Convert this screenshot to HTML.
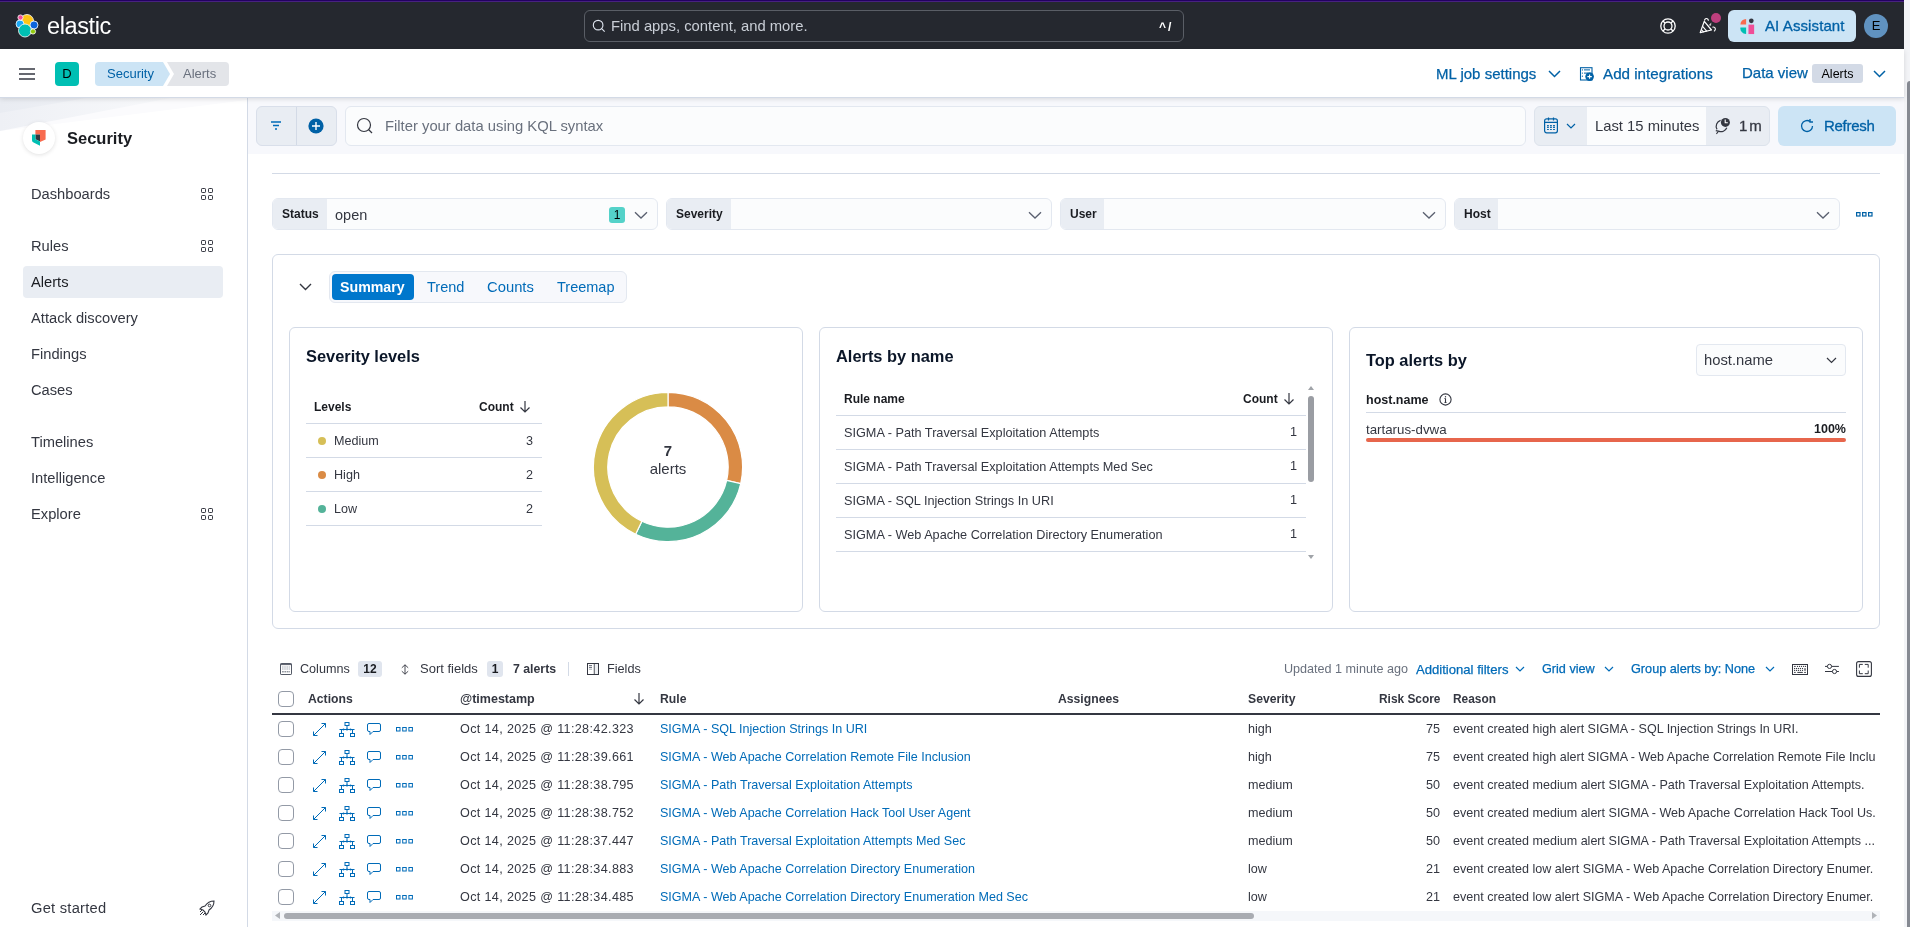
<!DOCTYPE html>
<html><head><meta charset="utf-8">
<style>
*{box-sizing:border-box;margin:0;padding:0}
html,body{width:1910px;height:927px;overflow:hidden;background:#fff;font-family:"Liberation Sans",sans-serif;color:#343741;-webkit-font-smoothing:antialiased}
.a{position:absolute}
.t{position:absolute;white-space:nowrap;line-height:1}
svg{display:block}
/* header */
#hdr{left:0;top:0;width:1904px;height:49px;background:linear-gradient(#230062 0,#230062 1px,#47227f 1px,#47227f 2px,#25282f 2px)}
#crumb{left:0;top:49px;width:1904px;height:48px;background:#fff;box-shadow:0 1px 0 #d3dae6,0 2px 5px rgba(0,0,0,.13);z-index:5}
#vscroll{left:1904px;top:0;width:6px;height:927px;background:#f3f4f7}
#vthumb{left:1907px;top:81px;width:3px;height:846px;background:#868a92;border-radius:3px 0 0 0}
#side{left:0;top:97px;width:248px;height:830px;background:#fff;border-right:1px solid #d3dae6}
.nav{position:absolute;left:31px;font-size:14.7px;color:#343741;white-space:nowrap;line-height:1}
.grid{position:absolute;left:201px;width:12px;height:12px}
#qbar{left:248px;top:97px;width:1656px;height:57px;background:#f7f8fc}
.btngrp{background:#e9edf3;border:1px solid #d9dfea;border-radius:6px}
.ctrl{position:absolute;height:32px;border:1px solid #e3e8f0;border-radius:6px;background:#fbfcfd;overflow:hidden}
.ctrl .lbl{position:absolute;left:0;top:0;bottom:0;background:#e9edf3;font-weight:700;font-size:12px;color:#1a1c21;line-height:30px;padding-left:9px}
.chev{position:absolute}
.panel{position:absolute;border:1px solid #d3dae6;border-radius:6px;background:#fff}
.h3{position:absolute;font-size:16px;font-weight:700;color:#0b1628;white-space:nowrap;line-height:1}
.link{color:#006bb8}
</style></head><body><div id="root" style="position:absolute;left:0;top:0;width:1910px;height:927px;overflow:hidden;will-change:transform">

<!-- HEADER -->
<div id="hdr" class="a">
  <!-- elastic logo -->
  <svg class="a" style="left:14px;top:12px" width="26" height="26" viewBox="0 0 26 26">
    <circle cx="13" cy="9" r="6.5" fill="#fec514" stroke="#fff" stroke-width="0.8"/>
    <circle cx="6" cy="12" r="4" fill="#1ba9f5" stroke="#fff" stroke-width="0.8"/>
    <circle cx="20" cy="13" r="4" fill="#0b64dd" stroke="#fff" stroke-width="0.8"/>
    <circle cx="11" cy="18.5" r="6.5" fill="#00bfb3" stroke="#fff" stroke-width="0.8"/>
    <circle cx="6.5" cy="5.5" r="2.6" fill="#f04e98" stroke="#fff" stroke-width="0.8"/>
    <circle cx="19" cy="19.5" r="2.6" fill="#93c90e" stroke="#fff" stroke-width="0.8"/>
  </svg>
  <div class="t" style="left:47px;top:15px;font-size:23.5px;color:#fff;letter-spacing:-0.4px">elastic</div>
  <!-- search -->
  <div class="a" style="left:584px;top:10px;width:600px;height:32px;border:1px solid #5a5e66;border-radius:6px;background:#25282f"></div>
  <svg class="a" style="left:592px;top:19px" width="14" height="14" viewBox="0 0 16 16"><circle cx="7" cy="7" r="5.5" fill="none" stroke="#dfe5ef" stroke-width="1.3"/><path d="M11 11l3.5 3.5" stroke="#dfe5ef" stroke-width="1.3"/></svg>
  <div class="t" style="left:611px;top:19px;font-size:14.8px;color:#c9ced6">Find apps, content, and more.</div>
  <div class="t" style="left:1159px;top:21px;font-size:12px;color:#fff;font-weight:700;letter-spacing:2px">^/</div>
  <!-- help -->
  <svg class="a" style="left:1659px;top:17px" width="18" height="18" viewBox="0 0 18 18"><circle cx="9" cy="9" r="7.2" fill="none" stroke="#fff" stroke-width="1.3"/><circle cx="9" cy="9" r="4" fill="none" stroke="#fff" stroke-width="1.3"/><path d="M4 4l2.2 2.2M14 4l-2.2 2.2M4 14l2.2-2.2M14 14l-2.2-2.2" stroke="#fff" stroke-width="1.3"/></svg>
  <!-- news -->
  <svg class="a" style="left:1696px;top:14px" width="24" height="22" viewBox="0 0 24 22"><path d="M4.2 18.6L8.3 7.3 15.5 16z" fill="none" stroke="#fff" stroke-width="1.2" stroke-linejoin="round"/><path d="M6.6 12.4l4.3 5M5.4 15.6l2.3 2.6" stroke="#fff" stroke-width="1.1"/><path d="M8.6 6.6C8.4 4 12.2 3.6 12.4 6.8M16.4 13.2C19.2 12.4 20.6 15.6 18 17.4" fill="none" stroke="#fff" stroke-width="1.1"/><path d="M12.6 11.2l2.8-2.6-.4 3.2z" fill="#ccc"/></svg>
  <div class="a" style="left:1711px;top:13px;width:10px;height:10px;border-radius:50%;background:#bd3f7d"></div>
  <!-- AI assistant -->
  <div class="a" style="left:1728px;top:10px;width:128px;height:32px;border-radius:6px;background:#cce4f5"></div>
  <svg class="a" style="left:1740px;top:18px" width="16" height="17" viewBox="0 0 16 18">
    <path d="M0 7a6 6 0 0 1 6-6v6z" fill="#f86b4f"/><path d="M0 10h6v7a6 6 0 0 1-6-7z" fill="#00bfb3"/><circle cx="11.5" cy="3" r="2.5" fill="#343741"/><rect x="8.5" y="7" width="6" height="10" fill="#f04e98"/>
  </svg>
  <div class="t" style="left:1765px;top:18px;font-size:15px;letter-spacing:0.1px;-webkit-text-stroke:0.3px #0061a6;color:#0061a6">AI Assistant</div>
  <div class="a" style="left:1864px;top:14px;width:24px;height:24px;border-radius:50%;background:#6092c0;color:#000;font-size:13px;text-align:center;line-height:23px">E</div>
</div>

<!-- BREADCRUMB BAR -->
<div id="crumb" class="a">
  <svg class="a" style="left:19px;top:19px" width="16" height="12" viewBox="0 0 16 12"><path d="M0 1h16M0 6h16M0 11h16" stroke="#343741" stroke-width="1.3"/></svg>
  <div class="a" style="left:55px;top:13px;width:24px;height:24px;border-radius:4px;background:#00bfb3;color:#000;font-size:13px;text-align:center;line-height:24px">D</div>
  <svg class="a" style="left:95px;top:13px" width="135" height="24" viewBox="0 0 135 24">
    <path d="M4 0h64l7 12-7 12H4a4 4 0 0 1-4-4V4a4 4 0 0 1 4-4z" fill="#cce4f5"/>
    <path d="M72 0h58a4 4 0 0 1 4 4v16a4 4 0 0 1-4 4H72l7-12z" fill="#e3e5e9"/>
  </svg>
  <div class="t" style="left:107px;top:18px;font-size:13px;color:#0061a6">Security</div>
  <div class="t" style="left:183px;top:18px;font-size:13px;color:#69707d">Alerts</div>
  <div class="t" style="left:1436px;top:17px;font-size:15px;color:#0061a6;-webkit-text-stroke:0.25px #0061a6">ML job settings</div>
  <svg class="a" style="left:1548px;top:21px" width="13" height="8" viewBox="0 0 13 8"><path d="M1 1l5.5 5.5L12 1" fill="none" stroke="#0061a6" stroke-width="1.5"/></svg>
  <svg class="a" style="left:1579px;top:17px" width="17" height="17" viewBox="0 0 17 17"><rect x="1.5" y="1.7" width="11.5" height="12.3" fill="none" stroke="#0061a6" stroke-width="1.1"/><circle cx="3.4" cy="3.9" r=".65" fill="#0061a6"/><circle cx="3.4" cy="7.1" r=".65" fill="#0061a6"/><circle cx="3.4" cy="10.2" r=".65" fill="#0061a6"/><path d="M5 3.9h6M5 7.1h4" stroke="#0061a6" stroke-width="1"/><circle cx="10.6" cy="10.6" r="4.3" fill="#0061a6"/><path d="M10.6 8.4v4.4M8.4 10.6h4.4" stroke="#fff" stroke-width="1.1"/></svg>
  <div class="t" style="left:1603px;top:17px;font-size:15.2px;color:#0061a6;-webkit-text-stroke:0.25px #0061a6">Add integrations</div>
  <div class="t" style="left:1742px;top:16px;font-size:15px;color:#0061a6;-webkit-text-stroke:0.25px #0061a6">Data view</div>
  <div class="a" style="left:1812px;top:15px;width:51px;height:19px;border-radius:3px;background:#d3dae6;font-size:12.5px;color:#000;text-align:center;line-height:20px">Alerts</div>
  <svg class="a" style="left:1873px;top:21px" width="13" height="8" viewBox="0 0 13 8"><path d="M1 1l5.5 5.5L12 1" fill="none" stroke="#0061a6" stroke-width="1.5"/></svg>
</div>

<div id="vscroll" class="a"></div>
<div id="vthumb" class="a"></div>

<!-- SIDEBAR -->
<div id="side" class="a">
  <svg class="a" style="left:0;top:0" width="247" height="40" viewBox="0 0 247 40"><defs><linearGradient id="sg1" x1="0" y1="0" x2="1" y2="0"><stop offset="0" stop-color="#eef0f5"/><stop offset="1" stop-color="#f8f9fb"/></linearGradient><linearGradient id="sg2" x1="0" y1="0" x2="1" y2="0"><stop offset="0" stop-color="#e9ecf2"/><stop offset="1" stop-color="#eef0f5"/></linearGradient></defs><path d="M0 0H247V3L0 34z" fill="#fbfbfd"/><path d="M0 0H176L0 34z" fill="url(#sg1)"/><path d="M0 0H92L0 16z" fill="url(#sg2)"/></svg>
  <div class="a" style="left:23px;top:25px;width:32px;height:32px;border-radius:50%;background:#fff;box-shadow:0 1px 4px rgba(0,0,0,.12)"></div>
  <svg class="a" style="left:32px;top:33px" width="14" height="16" viewBox="0 0 14 16">
    <path d="M3.4 0H13.6V9.4L8 12V4.6H3.4z" fill="#f86b4f"/>
    <path d="M3.4 4.6H8V11.5L3.4 9.2z" fill="#343741"/>
    <path d="M0 4.6H3.4V9.2L8 11.5V15.8L1.6 12.6A2.6 2.6 0 0 1 0 10.3z" fill="#00bfb3"/>
  </svg>
  <div class="t" style="left:67px;top:33px;font-size:16.5px;font-weight:700;color:#1a1c21">Security</div>
  <div class="nav" style="top:90px">Dashboards</div>
  <svg class="grid" style="top:91px" viewBox="0 0 12 12"><rect x=".5" y=".5" width="4" height="4" rx=".7" fill="none" stroke="#343741" stroke-width="1"/><rect x="7.5" y=".5" width="4" height="4" rx=".7" fill="none" stroke="#343741" stroke-width="1"/><rect x=".5" y="7.5" width="4" height="4" rx=".7" fill="none" stroke="#343741" stroke-width="1"/><rect x="7.5" y="7.5" width="4" height="4" rx=".7" fill="none" stroke="#343741" stroke-width="1"/></svg>
  <div class="nav" style="top:142px">Rules</div>
  <svg class="grid" style="top:143px" viewBox="0 0 12 12"><rect x=".5" y=".5" width="4" height="4" rx=".7" fill="none" stroke="#343741" stroke-width="1"/><rect x="7.5" y=".5" width="4" height="4" rx=".7" fill="none" stroke="#343741" stroke-width="1"/><rect x=".5" y="7.5" width="4" height="4" rx=".7" fill="none" stroke="#343741" stroke-width="1"/><rect x="7.5" y="7.5" width="4" height="4" rx=".7" fill="none" stroke="#343741" stroke-width="1"/></svg>
  <div class="a" style="left:23px;top:169px;width:200px;height:32px;border-radius:4px;background:#e9edf3"></div>
  <div class="nav" style="top:178px;color:#1a1c21">Alerts</div>
  <div class="nav" style="top:214px">Attack discovery</div>
  <div class="nav" style="top:250px">Findings</div>
  <div class="nav" style="top:286px">Cases</div>
  <div class="nav" style="top:338px">Timelines</div>
  <div class="nav" style="top:374px">Intelligence</div>
  <div class="nav" style="top:410px">Explore</div>
  <svg class="grid" style="top:411px" viewBox="0 0 12 12"><rect x=".5" y=".5" width="4" height="4" rx=".7" fill="none" stroke="#343741" stroke-width="1"/><rect x="7.5" y=".5" width="4" height="4" rx=".7" fill="none" stroke="#343741" stroke-width="1"/><rect x=".5" y="7.5" width="4" height="4" rx=".7" fill="none" stroke="#343741" stroke-width="1"/><rect x="7.5" y="7.5" width="4" height="4" rx=".7" fill="none" stroke="#343741" stroke-width="1"/></svg>
  <div class="nav" style="top:804px;letter-spacing:0.25px">Get started</div>
  <svg class="a" style="left:199px;top:803px" width="16" height="16" viewBox="0 0 16 16"><path d="M15 1c-4 0-7 2-9 5L3 7l-2 2 3 1 2 2 1 3 2-2 1-3c3-2 5-5 5-9z" fill="none" stroke="#343741" stroke-width="1.1"/><circle cx="10.5" cy="5.5" r="1.3" fill="none" stroke="#343741" stroke-width="1"/><path d="M4 12l-3 3M3 10l-2 2M6 13l-2 2" stroke="#343741" stroke-width="1"/></svg>
</div>

<!-- MAIN -->
<div id="qbar" class="a"></div>
<div class="a btngrp" style="left:256px;top:106px;width:81px;height:40px"></div>
<div class="a" style="left:296px;top:107px;width:1px;height:38px;background:#d3dae6"></div>
<svg class="a" style="left:269px;top:120px" width="14" height="12" viewBox="0 0 14 12"><path d="M2 2h10M4 5.5h6M6 9h2" stroke="#006bb8" stroke-width="1.3"/></svg>
<svg class="a" style="left:308px;top:118px" width="16" height="16" viewBox="0 0 16 16"><circle cx="8" cy="8" r="7.6" fill="#0061a6"/><path d="M8 4v8M4 8h8" stroke="#fff" stroke-width="1.4"/></svg>
<div class="a" style="left:345px;top:106px;width:1181px;height:40px;border:1px solid #e3e8f0;border-radius:6px;background:#fbfcfd"></div>
<svg class="a" style="left:356px;top:117px" width="18" height="18" viewBox="0 0 18 18"><circle cx="8" cy="8" r="6.5" fill="none" stroke="#343741" stroke-width="1.2"/><path d="M12.5 12.5l3.5 3.5" stroke="#343741" stroke-width="1.2"/></svg>
<div class="t" style="left:385px;top:119px;font-size:14.8px;color:#69707d">Filter your data using KQL syntax</div>
<div class="a" style="left:1534px;top:106px;width:236px;height:40px;border:1px solid #dde3ec;border-radius:6px;background:#e9edf3;overflow:hidden">
  <div class="a" style="left:52px;top:0;width:119px;height:38px;background:#fbfcfd"></div>
</div>
<svg class="a" style="left:1543px;top:117px" width="16" height="17" viewBox="0 0 16 17"><rect x="1.6" y="1.9" width="12.8" height="13.9" rx="2" fill="none" stroke="#0061a6" stroke-width="1.2"/><path d="M1.6 5.4h12.8M5.5 .6v2.8M10.5 .6v2.8" stroke="#0061a6" stroke-width="1.2"/><path d="M4.1 8.6h1.7M7.1 8.6h1.7M10.1 8.6h1.8M4.1 10.4h1.7M7.1 10.4h1.7M10.1 10.4h1.8M4.1 12.5h1.7M7.1 12.5h1.7M10.1 12.5h1.8" stroke="#0061a6" stroke-width="1.1"/></svg>
<svg class="a" style="left:1566px;top:123px" width="10" height="6" viewBox="0 0 10 6"><path d="M1 1l4 4 4-4" fill="none" stroke="#0061a6" stroke-width="1.2"/></svg>
<div class="t" style="left:1595px;top:119px;font-size:14.8px;color:#343741">Last 15 minutes</div>
<svg class="a" style="left:1714px;top:116px" width="17" height="19" viewBox="0 0 17 19"><path d="M6.6 4.4A6.2 6.2 0 0 0 3 13.4" fill="none" stroke="#343741" stroke-width="1.2"/><path d="M4.6 15.2A6.2 6.2 0 0 0 12.8 11.8" fill="none" stroke="#343741" stroke-width="1.2"/><path d="M2.4 17.8l2.2-2.6-2.8-.6" fill="none" stroke="#343741" stroke-width="1.1"/><circle cx="11.4" cy="6.4" r="4.5" fill="#343741"/><path d="M11.2 3.6v3.2h2.6" fill="none" stroke="#fff" stroke-width="1.1"/></svg>
<div class="t" style="left:1739px;top:118px;font-size:15px;letter-spacing:-1.1px;-webkit-text-stroke:0.3px #343741;color:#343741">1 m</div>
<div class="a" style="left:1778px;top:106px;width:118px;height:40px;border-radius:6px;background:#cce4f5"></div>
<svg class="a" style="left:1799px;top:118px" width="16" height="16" viewBox="0 0 16 16"><path d="M13.5 8A5.5 5.5 0 1 1 11 3.4" fill="none" stroke="#0061a6" stroke-width="1.3"/><path d="M11 1v3h3" fill="none" stroke="#0061a6" stroke-width="1.3"/></svg>
<div class="t" style="left:1824px;top:118px;font-size:15px;letter-spacing:-0.3px;-webkit-text-stroke:0.3px #0061a6;color:#0061a6">Refresh</div>

<div class="a" style="left:272px;top:173px;width:1608px;height:1px;background:#d3dae6"></div>

<div class="ctrl" style="left:272px;top:198px;width:386px">
  <div class="lbl" style="width:54px">Status</div>
  <div class="t" style="left:62px;top:9px;font-size:14.5px;color:#343741">open</div>
  <div class="a" style="left:336px;top:8px;width:16px;height:16px;border-radius:3px;background:#54d2c9;font-size:12px;text-align:center;line-height:16px;color:#000">1</div>
</div>
<div class="ctrl" style="left:666px;top:198px;width:386px"><div class="lbl" style="width:64px">Severity</div></div>
<div class="ctrl" style="left:1060px;top:198px;width:386px"><div class="lbl" style="width:43px">User</div></div>
<div class="ctrl" style="left:1454px;top:198px;width:386px"><div class="lbl" style="width:43px">Host</div></div>
<svg class="chev" style="left:634px;top:211px" width="14" height="8" viewBox="0 0 14 8"><path d="M1 1.2l6 5.8 6-5.8" fill="none" stroke="#5a6070" stroke-width="1.3"/></svg>
<svg class="chev" style="left:1028px;top:211px" width="14" height="8" viewBox="0 0 14 8"><path d="M1 1.2l6 5.8 6-5.8" fill="none" stroke="#5a6070" stroke-width="1.3"/></svg>
<svg class="chev" style="left:1422px;top:211px" width="14" height="8" viewBox="0 0 14 8"><path d="M1 1.2l6 5.8 6-5.8" fill="none" stroke="#5a6070" stroke-width="1.3"/></svg>
<svg class="chev" style="left:1816px;top:211px" width="14" height="8" viewBox="0 0 14 8"><path d="M1 1.2l6 5.8 6-5.8" fill="none" stroke="#5a6070" stroke-width="1.3"/></svg>
<svg class="a" style="left:1856px;top:212px" width="17" height="5" viewBox="0 0 17 5"><rect x=".6" y=".6" width="3.4" height="3.4" fill="none" stroke="#0061a6" stroke-width="1.2"/><rect x="6.6" y=".6" width="3.4" height="3.4" fill="none" stroke="#0061a6" stroke-width="1.2"/><rect x="12.6" y=".6" width="3.4" height="3.4" fill="none" stroke="#0061a6" stroke-width="1.2"/></svg>



<!-- SUMMARY PANEL -->
<div class="panel" style="left:272px;top:254px;width:1608px;height:375px"></div>
<svg class="a" style="left:299px;top:283px" width="13" height="8" viewBox="0 0 13 8"><path d="M1 1l5.5 5.5L12 1" fill="none" stroke="#343741" stroke-width="1.4"/></svg>
<div class="a" style="left:329px;top:271px;width:298px;height:32px;border:1px solid #e3e8f0;border-radius:6px;background:#f7f8fc"></div>
<div class="a" style="left:332px;top:274px;width:82px;height:26px;border-radius:4px;background:#0077cc"></div>
<div class="t" style="left:340px;top:280px;font-size:14.2px;font-weight:700;color:#fff">Summary</div>
<div class="t link" style="left:427px;top:280px;font-size:14.5px">Trend</div>
<div class="t link" style="left:487px;top:280px;font-size:14.8px">Counts</div>
<div class="t link" style="left:557px;top:280px;font-size:14.5px">Treemap</div>

<div class="panel" style="left:289px;top:327px;width:514px;height:285px"></div>
<div class="panel" style="left:819px;top:327px;width:514px;height:285px"></div>
<div class="panel" style="left:1349px;top:327px;width:514px;height:285px"></div>

<!-- severity levels -->
<div class="h3" style="left:306px;top:348px;font-size:16.4px">Severity levels</div>
<div class="t" style="left:314px;top:401px;font-size:12px;font-weight:700;color:#1a1c21">Levels</div>
<div class="t" style="left:479px;top:401px;font-size:12px;font-weight:700;color:#1a1c21">Count</div>
<svg class="a" style="left:519px;top:400px" width="12" height="13" viewBox="0 0 12 13"><path d="M6 1v11M1.5 7.5L6 12l4.5-4.5" fill="none" stroke="#343741" stroke-width="1.2"/></svg>
<div class="a" style="left:306px;top:423px;width:236px;height:1px;background:#d3dae6"></div>
<div class="a" style="left:306px;top:457px;width:236px;height:1px;background:#d3dae6"></div>
<div class="a" style="left:306px;top:491px;width:236px;height:1px;background:#d3dae6"></div>
<div class="a" style="left:306px;top:525px;width:236px;height:1px;background:#d3dae6"></div>
<div class="a" style="left:318px;top:437px;width:8px;height:8px;border-radius:50%;background:#d6bf57"></div>
<div class="a" style="left:318px;top:471px;width:8px;height:8px;border-radius:50%;background:#da8b45"></div>
<div class="a" style="left:318px;top:505px;width:8px;height:8px;border-radius:50%;background:#54b399"></div>
<div class="t" style="left:334px;top:435px;font-size:12.6px">Medium</div>
<div class="t" style="left:334px;top:469px;font-size:12.6px">High</div>
<div class="t" style="left:334px;top:503px;font-size:12.6px">Low</div>
<div class="t" style="left:526px;top:435px;font-size:12.6px">3</div>
<div class="t" style="left:526px;top:469px;font-size:12.6px">2</div>
<div class="t" style="left:526px;top:503px;font-size:12.6px">2</div>
<svg class="a" style="left:593px;top:392px" width="150" height="150" viewBox="0 0 150 150"><path d="M75.00 0.40A74.6 74.6 0 0 1 147.73 91.60L133.69 88.40A60.2 60.2 0 0 0 75.00 14.80z" fill="#da8b45" stroke="#fff" stroke-width="1.2"/><path d="M147.73 91.60A74.6 74.6 0 0 1 42.63 142.21L48.88 129.24A60.2 60.2 0 0 0 133.69 88.40z" fill="#54b399" stroke="#fff" stroke-width="1.2"/><path d="M42.63 142.21A74.6 74.6 0 0 1 75.00 0.40L75.00 14.80A60.2 60.2 0 0 0 48.88 129.24z" fill="#d6bf57" stroke="#fff" stroke-width="1.2"/></svg>
<div class="t" style="left:628px;top:443px;width:80px;text-align:center;font-size:15px;font-weight:700;color:#343741">7</div>
<div class="t" style="left:628px;top:461px;width:80px;text-align:center;font-size:15px;color:#343741">alerts</div>

<!-- alerts by name -->
<div class="h3" style="left:836px;top:348px;font-size:16.4px">Alerts by name</div>
<div class="t" style="left:844px;top:393px;font-size:12px;font-weight:700;color:#1a1c21">Rule name</div>
<div class="t" style="left:1243px;top:393px;font-size:12px;font-weight:700;color:#1a1c21">Count</div>
<svg class="a" style="left:1283px;top:392px" width="12" height="13" viewBox="0 0 12 13"><path d="M6 1v11M1.5 7.5L6 12l4.5-4.5" fill="none" stroke="#343741" stroke-width="1.2"/></svg>
<div class="a" style="left:836px;top:415px;width:470px;height:1px;background:#d3dae6"></div>
<div class="a" style="left:836px;top:449px;width:470px;height:1px;background:#d3dae6"></div>
<div class="a" style="left:836px;top:483px;width:470px;height:1px;background:#d3dae6"></div>
<div class="a" style="left:836px;top:517px;width:470px;height:1px;background:#d3dae6"></div>
<div class="a" style="left:836px;top:551px;width:470px;height:1px;background:#d3dae6"></div>
<div class="t" style="left:844px;top:427px;font-size:12.7px">SIGMA - Path Traversal Exploitation Attempts</div>
<div class="t" style="left:844px;top:461px;font-size:12.7px">SIGMA - Path Traversal Exploitation Attempts Med Sec</div>
<div class="t" style="left:844px;top:495px;font-size:12.7px">SIGMA - SQL Injection Strings In URI</div>
<div class="t" style="left:844px;top:529px;font-size:12.7px">SIGMA - Web Apache Correlation Directory Enumeration</div>
<div class="t" style="left:1290px;top:426px;font-size:12.7px">1</div>
<div class="t" style="left:1290px;top:460px;font-size:12.7px">1</div>
<div class="t" style="left:1290px;top:494px;font-size:12.7px">1</div>
<div class="t" style="left:1290px;top:528px;font-size:12.7px">1</div>
<div class="a" style="left:1308px;top:396px;width:6px;height:86px;border-radius:3px;background:#9a9da3"></div>
<svg class="a" style="left:1308px;top:386px" width="6" height="4" viewBox="0 0 6 4"><path d="M0 4L3 0l3 4z" fill="#a0a3a8"/></svg>
<svg class="a" style="left:1308px;top:555px" width="6" height="4" viewBox="0 0 6 4"><path d="M0 0l3 4 3-4z" fill="#a0a3a8"/></svg>

<!-- top alerts by -->
<div class="h3" style="left:1366px;top:352px;font-size:16.4px">Top alerts by</div>
<div class="a" style="left:1696px;top:344px;width:150px;height:32px;border:1px solid #e3e8f0;border-radius:4px;background:#fbfcfd"></div>
<div class="t" style="left:1704px;top:353px;font-size:14.8px;color:#343741">host.name</div>
<svg class="a" style="left:1826px;top:357px" width="11" height="7" viewBox="0 0 11 7"><path d="M1 1l4.5 4.5L10 1" fill="none" stroke="#343741" stroke-width="1.2"/></svg>
<div class="t" style="left:1366px;top:394px;font-size:12.5px;font-weight:700;color:#1a1c21">host.name</div>
<svg class="a" style="left:1439px;top:393px" width="13" height="13" viewBox="0 0 13 13"><circle cx="6.5" cy="6.5" r="5.6" fill="none" stroke="#343741" stroke-width="1.1"/><path d="M6.5 5.5v4M5.5 9.5h2M5.5 5.5h1" stroke="#343741" stroke-width="1.1"/><circle cx="6.5" cy="3.7" r=".7" fill="#343741"/></svg>
<div class="a" style="left:1366px;top:412px;width:480px;height:1px;background:#d3dae6"></div>
<div class="t" style="left:1366px;top:423px;font-size:13.3px;color:#343741">tartarus-dvwa</div>
<div class="t" style="left:1766px;top:423px;width:80px;text-align:right;font-size:12.5px;font-weight:700;color:#1a1c21">100%</div>
<div class="a" style="left:1366px;top:438px;width:480px;height:4px;border-radius:2px;background:#e7664c"></div>

<style>
.cb{position:absolute;left:278px;width:16px;height:16px;border:1px solid #939aa6;border-radius:4px;background:#fff}
.rt{position:absolute;white-space:nowrap;line-height:1;font-size:12.6px;color:#343741}
.ic{position:absolute}
</style>
<!-- TABLE TOOLBAR -->
<svg class="a" style="left:280px;top:663px" width="12" height="12" viewBox="0 0 12 12"><rect x=".5" y=".5" width="11" height="11" rx=".6" fill="none" stroke="#535966" stroke-width="1"/><path d="M.5 1.6h11" stroke="#535966" stroke-width="1"/><path d="M2 4h8M2 6h8" stroke="#aab0b9" stroke-width="1.1" stroke-dasharray="1.6 .6"/><path d="M2 8.8h8" stroke="#535966" stroke-width=".9" stroke-dasharray="1.8 .6"/></svg>
<div class="t" style="left:300px;top:663px;font-size:12.6px;color:#343741">Columns</div>
<div class="a" style="left:358px;top:661px;width:24px;height:16px;border-radius:3px;background:#e0e5ee;font-size:12px;font-weight:700;text-align:center;line-height:16px;color:#1a1c21">12</div>
<svg class="a" style="left:401px;top:664px" width="8" height="11" viewBox="0 0 8 11"><path d="M4 .8v9.4M.8 3.8L4 .8l3.2 3M.8 7.2L4 10.2l3.2-3" fill="none" stroke="#343741" stroke-width=".9"/></svg>
<div class="t" style="left:420px;top:662px;font-size:13px;color:#343741">Sort fields</div>
<div class="a" style="left:487px;top:661px;width:16px;height:16px;border-radius:3px;background:#e0e5ee;font-size:12px;font-weight:700;text-align:center;line-height:16px;color:#1a1c21">1</div>
<div class="t" style="left:513px;top:663px;font-size:12.3px;font-weight:700;color:#343741">7 alerts</div>
<div class="a" style="left:568px;top:662px;width:1px;height:14px;background:#d3dae6"></div>
<svg class="a" style="left:587px;top:663px" width="12" height="12" viewBox="0 0 12 12"><rect x=".5" y=".5" width="11" height="11" fill="none" stroke="#343741" stroke-width="1"/><path d="M7.3 .5v11" stroke="#343741" stroke-width="1"/><path d="M2 2.6h3M2 4.4h3" stroke="#535966" stroke-width=".9"/><path d="M2 6.2h3" stroke="#9aa0a8" stroke-width=".9"/><rect x="7.8" y="1" width="3.2" height="10" fill="#eef0f3"/></svg>
<div class="t" style="left:607px;top:663px;font-size:12.7px;color:#343741">Fields</div>

<div class="t" style="left:1284px;top:663px;font-size:12.6px;color:#69707d">Updated 1 minute ago</div>
<div class="t link" style="left:1416px;top:663px;font-size:13.1px;-webkit-text-stroke:0.25px #006bb8">Additional filters</div>
<svg class="a" style="left:1515px;top:666px" width="10" height="6" viewBox="0 0 10 6"><path d="M1 1l4 4 4-4" fill="none" stroke="#006bb8" stroke-width="1.2"/></svg>
<div class="t link" style="left:1542px;top:663px;font-size:12.65px;-webkit-text-stroke:0.25px #006bb8">Grid view</div>
<svg class="a" style="left:1604px;top:666px" width="10" height="6" viewBox="0 0 10 6"><path d="M1 1l4 4 4-4" fill="none" stroke="#006bb8" stroke-width="1.2"/></svg>
<div class="t link" style="left:1631px;top:663px;font-size:12.7px;-webkit-text-stroke:0.25px #006bb8">Group alerts by: None</div>
<svg class="a" style="left:1765px;top:666px" width="10" height="6" viewBox="0 0 10 6"><path d="M1 1l4 4 4-4" fill="none" stroke="#006bb8" stroke-width="1.2"/></svg>
<svg class="a" style="left:1792px;top:664px" width="16" height="11" viewBox="0 0 16 11"><rect x=".5" y=".5" width="15" height="10" fill="none" stroke="#343741" stroke-width="1"/><rect x="4.95" y="1.85" width="1.1" height="1.1" fill="#343741"/><rect x="6.95" y="1.85" width="1.1" height="1.1" fill="#343741"/><rect x="8.95" y="1.85" width="1.1" height="1.1" fill="#343741"/><rect x="11.05" y="1.85" width="1.1" height="1.1" fill="#343741"/><rect x="12.95" y="1.85" width="1.1" height="1.1" fill="#343741"/><rect x="2.05" y="3.95" width="1.1" height="1.1" fill="#343741"/><rect x="2.05" y="5.85" width="1.1" height="1.1" fill="#343741"/><rect x="3.95" y="3.95" width="1.1" height="1.1" fill="#343741"/><rect x="3.95" y="5.85" width="1.1" height="1.1" fill="#343741"/><rect x="5.85" y="3.95" width="1.1" height="1.1" fill="#343741"/><rect x="5.85" y="5.85" width="1.1" height="1.1" fill="#343741"/><rect x="7.85" y="3.95" width="1.1" height="1.1" fill="#343741"/><rect x="7.85" y="5.85" width="1.1" height="1.1" fill="#343741"/><rect x="9.95" y="3.95" width="1.1" height="1.1" fill="#343741"/><rect x="9.95" y="5.85" width="1.1" height="1.1" fill="#343741"/><path d="M2.1 2.4h1.6M2.1 8.4h1.6M5.3 8.4h5.5M12.2 8.4h1.7" stroke="#343741" stroke-width="1"/><rect x="12.4" y="4.2" width="1.2" height="2.6" fill="#343741"/></svg>
<svg class="a" style="left:1824px;top:663px" width="16" height="12" viewBox="0 0 16 12"><path d="M1 3.4h13.9M1 8.5h13.9" stroke="#343741" stroke-width="1"/><circle cx="5.5" cy="3.4" r="2.1" fill="#fff" stroke="#343741" stroke-width="1"/><circle cx="10.5" cy="8.5" r="2.1" fill="#fff" stroke="#343741" stroke-width="1"/></svg>
<svg class="a" style="left:1856px;top:661px" width="16" height="16" viewBox="0 0 16 16"><rect x=".6" y=".6" width="14.8" height="14.8" rx="2" fill="none" stroke="#343741" stroke-width="1.1"/><path d="M3.4 6.7V3.4H6.8M8.8 3.4h3.4v3.3M3.4 9.5v3.2h3.4M8.8 12.7h3.4V9.5" fill="none" stroke="#343741" stroke-width="1"/></svg>

<!-- TABLE HEADER -->
<div class="cb" style="top:691px"></div>
<div class="t" style="left:308px;top:693px;font-size:12.2px;font-weight:700;color:#343741">Actions</div>
<div class="t" style="left:460px;top:693px;font-size:12.5px;font-weight:700;color:#343741">@timestamp</div>
<svg class="a" style="left:633px;top:692px" width="12" height="13" viewBox="0 0 12 13"><path d="M6 1v11M1.5 7.5L6 12l4.5-4.5" fill="none" stroke="#343741" stroke-width="1.2"/></svg>
<div class="t" style="left:660px;top:693px;font-size:12.2px;font-weight:700;color:#343741">Rule</div>
<div class="t" style="left:1058px;top:693px;font-size:12.2px;font-weight:700;color:#343741">Assignees</div>
<div class="t" style="left:1248px;top:693px;font-size:12.2px;font-weight:700;color:#343741">Severity</div>
<div class="t" style="left:1379px;top:694px;font-size:11.9px;font-weight:700;color:#343741">Risk Score</div>
<div class="t" style="left:1453px;top:694px;font-size:11.9px;font-weight:700;color:#343741">Reason</div>
<div class="a" style="left:272px;top:713px;width:1608px;height:2px;background:#343741"></div>
<div class="cb" style="top:721px"></div>
<svg class="ic" style="left:312px;top:722px" width="15" height="15" viewBox="0 0 15 15"><path d="M1.5 13.5l12-12M1.5 9.5v4h4M9.5 1.5h4v4" fill="none" stroke="#006bb8" stroke-width="1"/></svg>
<svg class="ic" style="left:339px;top:722px" width="16" height="15" viewBox="0 0 16 15"><rect x="6" y=".5" width="4" height="3" fill="none" stroke="#006bb8" stroke-width="1"/><rect x=".5" y="11.5" width="4" height="3" fill="none" stroke="#006bb8" stroke-width="1"/><rect x="11.5" y="11.5" width="4" height="3" fill="none" stroke="#006bb8" stroke-width="1"/><path d="M8 3.5v4M2.5 11.5V7.5h11v4M.5 7.5h15" fill="none" stroke="#006bb8" stroke-width="1"/><circle cx="8" cy="7.5" r="1.1" fill="#006bb8"/><circle cx="4.5" cy="7.5" r=".9" fill="#006bb8"/><circle cx="11.5" cy="7.5" r=".9" fill="#006bb8"/></svg>
<svg class="ic" style="left:367px;top:723px" width="14" height="13" viewBox="0 0 14 13"><path d="M2 .5h10A1.5 1.5 0 0 1 13.5 2v5A1.5 1.5 0 0 1 12 8.5H6L3 11.5V8.5H2A1.5 1.5 0 0 1 .5 7V2A1.5 1.5 0 0 1 2 .5z" fill="none" stroke="#006bb8" stroke-width="1"/></svg>
<svg class="ic" style="left:396px;top:727px" width="17" height="5" viewBox="0 0 17 5"><rect x=".5" y=".5" width="3.5" height="3.5" fill="none" stroke="#006bb8" stroke-width="1"/><rect x="6.7" y=".5" width="3.5" height="3.5" fill="none" stroke="#006bb8" stroke-width="1"/><rect x="12.9" y=".5" width="3.5" height="3.5" fill="none" stroke="#006bb8" stroke-width="1"/></svg>
<div class="rt" style="left:460px;top:723px;letter-spacing:0.35px">Oct 14, 2025 @ 11:28:42.323</div>
<div class="rt link" style="left:660px;top:723px;font-size:12.55px;color:#006bb8">SIGMA - SQL Injection Strings In URI</div>
<div class="rt" style="left:1248px;top:723px">high</div>
<div class="rt" style="left:1400px;top:723px;width:40px;text-align:right">75</div>
<div class="rt" style="left:1453px;top:723px;width:427px;overflow:hidden;font-size:12.55px">event created high alert SIGMA - SQL Injection Strings In URI.</div>
<div class="cb" style="top:749px"></div>
<svg class="ic" style="left:312px;top:750px" width="15" height="15" viewBox="0 0 15 15"><path d="M1.5 13.5l12-12M1.5 9.5v4h4M9.5 1.5h4v4" fill="none" stroke="#006bb8" stroke-width="1"/></svg>
<svg class="ic" style="left:339px;top:750px" width="16" height="15" viewBox="0 0 16 15"><rect x="6" y=".5" width="4" height="3" fill="none" stroke="#006bb8" stroke-width="1"/><rect x=".5" y="11.5" width="4" height="3" fill="none" stroke="#006bb8" stroke-width="1"/><rect x="11.5" y="11.5" width="4" height="3" fill="none" stroke="#006bb8" stroke-width="1"/><path d="M8 3.5v4M2.5 11.5V7.5h11v4M.5 7.5h15" fill="none" stroke="#006bb8" stroke-width="1"/><circle cx="8" cy="7.5" r="1.1" fill="#006bb8"/><circle cx="4.5" cy="7.5" r=".9" fill="#006bb8"/><circle cx="11.5" cy="7.5" r=".9" fill="#006bb8"/></svg>
<svg class="ic" style="left:367px;top:751px" width="14" height="13" viewBox="0 0 14 13"><path d="M2 .5h10A1.5 1.5 0 0 1 13.5 2v5A1.5 1.5 0 0 1 12 8.5H6L3 11.5V8.5H2A1.5 1.5 0 0 1 .5 7V2A1.5 1.5 0 0 1 2 .5z" fill="none" stroke="#006bb8" stroke-width="1"/></svg>
<svg class="ic" style="left:396px;top:755px" width="17" height="5" viewBox="0 0 17 5"><rect x=".5" y=".5" width="3.5" height="3.5" fill="none" stroke="#006bb8" stroke-width="1"/><rect x="6.7" y=".5" width="3.5" height="3.5" fill="none" stroke="#006bb8" stroke-width="1"/><rect x="12.9" y=".5" width="3.5" height="3.5" fill="none" stroke="#006bb8" stroke-width="1"/></svg>
<div class="rt" style="left:460px;top:751px;letter-spacing:0.35px">Oct 14, 2025 @ 11:28:39.661</div>
<div class="rt link" style="left:660px;top:751px;font-size:12.55px;color:#006bb8">SIGMA - Web Apache Correlation Remote File Inclusion</div>
<div class="rt" style="left:1248px;top:751px">high</div>
<div class="rt" style="left:1400px;top:751px;width:40px;text-align:right">75</div>
<div class="rt" style="left:1453px;top:751px;width:427px;overflow:hidden;font-size:12.55px">event created high alert SIGMA - Web Apache Correlation Remote File Inclu</div>
<div class="cb" style="top:777px"></div>
<svg class="ic" style="left:312px;top:778px" width="15" height="15" viewBox="0 0 15 15"><path d="M1.5 13.5l12-12M1.5 9.5v4h4M9.5 1.5h4v4" fill="none" stroke="#006bb8" stroke-width="1"/></svg>
<svg class="ic" style="left:339px;top:778px" width="16" height="15" viewBox="0 0 16 15"><rect x="6" y=".5" width="4" height="3" fill="none" stroke="#006bb8" stroke-width="1"/><rect x=".5" y="11.5" width="4" height="3" fill="none" stroke="#006bb8" stroke-width="1"/><rect x="11.5" y="11.5" width="4" height="3" fill="none" stroke="#006bb8" stroke-width="1"/><path d="M8 3.5v4M2.5 11.5V7.5h11v4M.5 7.5h15" fill="none" stroke="#006bb8" stroke-width="1"/><circle cx="8" cy="7.5" r="1.1" fill="#006bb8"/><circle cx="4.5" cy="7.5" r=".9" fill="#006bb8"/><circle cx="11.5" cy="7.5" r=".9" fill="#006bb8"/></svg>
<svg class="ic" style="left:367px;top:779px" width="14" height="13" viewBox="0 0 14 13"><path d="M2 .5h10A1.5 1.5 0 0 1 13.5 2v5A1.5 1.5 0 0 1 12 8.5H6L3 11.5V8.5H2A1.5 1.5 0 0 1 .5 7V2A1.5 1.5 0 0 1 2 .5z" fill="none" stroke="#006bb8" stroke-width="1"/></svg>
<svg class="ic" style="left:396px;top:783px" width="17" height="5" viewBox="0 0 17 5"><rect x=".5" y=".5" width="3.5" height="3.5" fill="none" stroke="#006bb8" stroke-width="1"/><rect x="6.7" y=".5" width="3.5" height="3.5" fill="none" stroke="#006bb8" stroke-width="1"/><rect x="12.9" y=".5" width="3.5" height="3.5" fill="none" stroke="#006bb8" stroke-width="1"/></svg>
<div class="rt" style="left:460px;top:779px;letter-spacing:0.35px">Oct 14, 2025 @ 11:28:38.795</div>
<div class="rt link" style="left:660px;top:779px;font-size:12.55px;color:#006bb8">SIGMA - Path Traversal Exploitation Attempts</div>
<div class="rt" style="left:1248px;top:779px">medium</div>
<div class="rt" style="left:1400px;top:779px;width:40px;text-align:right">50</div>
<div class="rt" style="left:1453px;top:779px;width:427px;overflow:hidden;font-size:12.55px">event created medium alert SIGMA - Path Traversal Exploitation Attempts.</div>
<div class="cb" style="top:805px"></div>
<svg class="ic" style="left:312px;top:806px" width="15" height="15" viewBox="0 0 15 15"><path d="M1.5 13.5l12-12M1.5 9.5v4h4M9.5 1.5h4v4" fill="none" stroke="#006bb8" stroke-width="1"/></svg>
<svg class="ic" style="left:339px;top:806px" width="16" height="15" viewBox="0 0 16 15"><rect x="6" y=".5" width="4" height="3" fill="none" stroke="#006bb8" stroke-width="1"/><rect x=".5" y="11.5" width="4" height="3" fill="none" stroke="#006bb8" stroke-width="1"/><rect x="11.5" y="11.5" width="4" height="3" fill="none" stroke="#006bb8" stroke-width="1"/><path d="M8 3.5v4M2.5 11.5V7.5h11v4M.5 7.5h15" fill="none" stroke="#006bb8" stroke-width="1"/><circle cx="8" cy="7.5" r="1.1" fill="#006bb8"/><circle cx="4.5" cy="7.5" r=".9" fill="#006bb8"/><circle cx="11.5" cy="7.5" r=".9" fill="#006bb8"/></svg>
<svg class="ic" style="left:367px;top:807px" width="14" height="13" viewBox="0 0 14 13"><path d="M2 .5h10A1.5 1.5 0 0 1 13.5 2v5A1.5 1.5 0 0 1 12 8.5H6L3 11.5V8.5H2A1.5 1.5 0 0 1 .5 7V2A1.5 1.5 0 0 1 2 .5z" fill="none" stroke="#006bb8" stroke-width="1"/></svg>
<svg class="ic" style="left:396px;top:811px" width="17" height="5" viewBox="0 0 17 5"><rect x=".5" y=".5" width="3.5" height="3.5" fill="none" stroke="#006bb8" stroke-width="1"/><rect x="6.7" y=".5" width="3.5" height="3.5" fill="none" stroke="#006bb8" stroke-width="1"/><rect x="12.9" y=".5" width="3.5" height="3.5" fill="none" stroke="#006bb8" stroke-width="1"/></svg>
<div class="rt" style="left:460px;top:807px;letter-spacing:0.35px">Oct 14, 2025 @ 11:28:38.752</div>
<div class="rt link" style="left:660px;top:807px;font-size:12.55px;color:#006bb8">SIGMA - Web Apache Correlation Hack Tool User Agent</div>
<div class="rt" style="left:1248px;top:807px">medium</div>
<div class="rt" style="left:1400px;top:807px;width:40px;text-align:right">50</div>
<div class="rt" style="left:1453px;top:807px;width:427px;overflow:hidden;font-size:12.55px">event created medium alert SIGMA - Web Apache Correlation Hack Tool Us.</div>
<div class="cb" style="top:833px"></div>
<svg class="ic" style="left:312px;top:834px" width="15" height="15" viewBox="0 0 15 15"><path d="M1.5 13.5l12-12M1.5 9.5v4h4M9.5 1.5h4v4" fill="none" stroke="#006bb8" stroke-width="1"/></svg>
<svg class="ic" style="left:339px;top:834px" width="16" height="15" viewBox="0 0 16 15"><rect x="6" y=".5" width="4" height="3" fill="none" stroke="#006bb8" stroke-width="1"/><rect x=".5" y="11.5" width="4" height="3" fill="none" stroke="#006bb8" stroke-width="1"/><rect x="11.5" y="11.5" width="4" height="3" fill="none" stroke="#006bb8" stroke-width="1"/><path d="M8 3.5v4M2.5 11.5V7.5h11v4M.5 7.5h15" fill="none" stroke="#006bb8" stroke-width="1"/><circle cx="8" cy="7.5" r="1.1" fill="#006bb8"/><circle cx="4.5" cy="7.5" r=".9" fill="#006bb8"/><circle cx="11.5" cy="7.5" r=".9" fill="#006bb8"/></svg>
<svg class="ic" style="left:367px;top:835px" width="14" height="13" viewBox="0 0 14 13"><path d="M2 .5h10A1.5 1.5 0 0 1 13.5 2v5A1.5 1.5 0 0 1 12 8.5H6L3 11.5V8.5H2A1.5 1.5 0 0 1 .5 7V2A1.5 1.5 0 0 1 2 .5z" fill="none" stroke="#006bb8" stroke-width="1"/></svg>
<svg class="ic" style="left:396px;top:839px" width="17" height="5" viewBox="0 0 17 5"><rect x=".5" y=".5" width="3.5" height="3.5" fill="none" stroke="#006bb8" stroke-width="1"/><rect x="6.7" y=".5" width="3.5" height="3.5" fill="none" stroke="#006bb8" stroke-width="1"/><rect x="12.9" y=".5" width="3.5" height="3.5" fill="none" stroke="#006bb8" stroke-width="1"/></svg>
<div class="rt" style="left:460px;top:835px;letter-spacing:0.35px">Oct 14, 2025 @ 11:28:37.447</div>
<div class="rt link" style="left:660px;top:835px;font-size:12.55px;color:#006bb8">SIGMA - Path Traversal Exploitation Attempts Med Sec</div>
<div class="rt" style="left:1248px;top:835px">medium</div>
<div class="rt" style="left:1400px;top:835px;width:40px;text-align:right">50</div>
<div class="rt" style="left:1453px;top:835px;width:427px;overflow:hidden;font-size:12.55px">event created medium alert SIGMA - Path Traversal Exploitation Attempts ...</div>
<div class="cb" style="top:861px"></div>
<svg class="ic" style="left:312px;top:862px" width="15" height="15" viewBox="0 0 15 15"><path d="M1.5 13.5l12-12M1.5 9.5v4h4M9.5 1.5h4v4" fill="none" stroke="#006bb8" stroke-width="1"/></svg>
<svg class="ic" style="left:339px;top:862px" width="16" height="15" viewBox="0 0 16 15"><rect x="6" y=".5" width="4" height="3" fill="none" stroke="#006bb8" stroke-width="1"/><rect x=".5" y="11.5" width="4" height="3" fill="none" stroke="#006bb8" stroke-width="1"/><rect x="11.5" y="11.5" width="4" height="3" fill="none" stroke="#006bb8" stroke-width="1"/><path d="M8 3.5v4M2.5 11.5V7.5h11v4M.5 7.5h15" fill="none" stroke="#006bb8" stroke-width="1"/><circle cx="8" cy="7.5" r="1.1" fill="#006bb8"/><circle cx="4.5" cy="7.5" r=".9" fill="#006bb8"/><circle cx="11.5" cy="7.5" r=".9" fill="#006bb8"/></svg>
<svg class="ic" style="left:367px;top:863px" width="14" height="13" viewBox="0 0 14 13"><path d="M2 .5h10A1.5 1.5 0 0 1 13.5 2v5A1.5 1.5 0 0 1 12 8.5H6L3 11.5V8.5H2A1.5 1.5 0 0 1 .5 7V2A1.5 1.5 0 0 1 2 .5z" fill="none" stroke="#006bb8" stroke-width="1"/></svg>
<svg class="ic" style="left:396px;top:867px" width="17" height="5" viewBox="0 0 17 5"><rect x=".5" y=".5" width="3.5" height="3.5" fill="none" stroke="#006bb8" stroke-width="1"/><rect x="6.7" y=".5" width="3.5" height="3.5" fill="none" stroke="#006bb8" stroke-width="1"/><rect x="12.9" y=".5" width="3.5" height="3.5" fill="none" stroke="#006bb8" stroke-width="1"/></svg>
<div class="rt" style="left:460px;top:863px;letter-spacing:0.35px">Oct 14, 2025 @ 11:28:34.883</div>
<div class="rt link" style="left:660px;top:863px;font-size:12.55px;color:#006bb8">SIGMA - Web Apache Correlation Directory Enumeration</div>
<div class="rt" style="left:1248px;top:863px">low</div>
<div class="rt" style="left:1400px;top:863px;width:40px;text-align:right">21</div>
<div class="rt" style="left:1453px;top:863px;width:427px;overflow:hidden;font-size:12.55px">event created low alert SIGMA - Web Apache Correlation Directory Enumer.</div>
<div class="cb" style="top:889px"></div>
<svg class="ic" style="left:312px;top:890px" width="15" height="15" viewBox="0 0 15 15"><path d="M1.5 13.5l12-12M1.5 9.5v4h4M9.5 1.5h4v4" fill="none" stroke="#006bb8" stroke-width="1"/></svg>
<svg class="ic" style="left:339px;top:890px" width="16" height="15" viewBox="0 0 16 15"><rect x="6" y=".5" width="4" height="3" fill="none" stroke="#006bb8" stroke-width="1"/><rect x=".5" y="11.5" width="4" height="3" fill="none" stroke="#006bb8" stroke-width="1"/><rect x="11.5" y="11.5" width="4" height="3" fill="none" stroke="#006bb8" stroke-width="1"/><path d="M8 3.5v4M2.5 11.5V7.5h11v4M.5 7.5h15" fill="none" stroke="#006bb8" stroke-width="1"/><circle cx="8" cy="7.5" r="1.1" fill="#006bb8"/><circle cx="4.5" cy="7.5" r=".9" fill="#006bb8"/><circle cx="11.5" cy="7.5" r=".9" fill="#006bb8"/></svg>
<svg class="ic" style="left:367px;top:891px" width="14" height="13" viewBox="0 0 14 13"><path d="M2 .5h10A1.5 1.5 0 0 1 13.5 2v5A1.5 1.5 0 0 1 12 8.5H6L3 11.5V8.5H2A1.5 1.5 0 0 1 .5 7V2A1.5 1.5 0 0 1 2 .5z" fill="none" stroke="#006bb8" stroke-width="1"/></svg>
<svg class="ic" style="left:396px;top:895px" width="17" height="5" viewBox="0 0 17 5"><rect x=".5" y=".5" width="3.5" height="3.5" fill="none" stroke="#006bb8" stroke-width="1"/><rect x="6.7" y=".5" width="3.5" height="3.5" fill="none" stroke="#006bb8" stroke-width="1"/><rect x="12.9" y=".5" width="3.5" height="3.5" fill="none" stroke="#006bb8" stroke-width="1"/></svg>
<div class="rt" style="left:460px;top:891px;letter-spacing:0.35px">Oct 14, 2025 @ 11:28:34.485</div>
<div class="rt link" style="left:660px;top:891px;font-size:12.55px;color:#006bb8">SIGMA - Web Apache Correlation Directory Enumeration Med Sec</div>
<div class="rt" style="left:1248px;top:891px">low</div>
<div class="rt" style="left:1400px;top:891px;width:40px;text-align:right">21</div>
<div class="rt" style="left:1453px;top:891px;width:427px;overflow:hidden;font-size:12.55px">event created low alert SIGMA - Web Apache Correlation Directory Enumer.</div>

<!-- H SCROLL -->
<div class="a" style="left:272px;top:911px;width:1608px;height:10px;background:#f5f7fa"></div>
<div class="a" style="left:284px;top:913px;width:970px;height:6px;border-radius:3px;background:#a9acb2"></div>
<svg class="a" style="left:275px;top:912px" width="5" height="7" viewBox="0 0 5 7"><path d="M5 0L0 3.5 5 7z" fill="#b0b3b8"/></svg>
<svg class="a" style="left:1872px;top:912px" width="5" height="7" viewBox="0 0 5 7"><path d="M0 0l5 3.5L0 7z" fill="#b0b3b8"/></svg>
</div></body></html>
